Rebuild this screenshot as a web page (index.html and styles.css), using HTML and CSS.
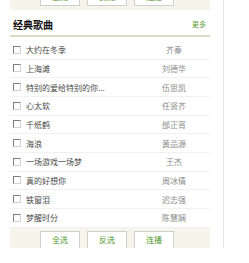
FILE: index.html
```html
<!DOCTYPE html>
<html lang="zh-CN">
<head>
  <meta charset="UTF-8" />
  <meta name="viewport" content="width=device-width, initial-scale=1.0" />
  <title>经典歌曲</title>
  <link rel="stylesheet" href="styles.css">
</head>
<body>

  <div class="panel">
    <!-- 上一个栏目的按钮条（只露出下半截） -->
    <div class="toolbar toolbar-prev">
      <button class="btn">全选</button>
      <button class="btn">反选</button>
      <button class="btn">连播</button>
    </div>

    <div class="box-head">
      <strong>经典歌曲</strong>
      <a class="more" href="#">更多</a>
    </div>

    <ul class="song-list">
      <li><span class="chk"></span><span class="name">大约在冬季</span><span class="singer">齐秦</span></li>
      <li><span class="chk"></span><span class="name">上海滩</span><span class="singer">刘德华</span></li>
      <li><span class="chk"></span><span class="name">特别的爱给特别的你...</span><span class="singer">伍思凯</span></li>
      <li><span class="chk"></span><span class="name">心太软</span><span class="singer">任贤齐</span></li>
      <li><span class="chk"></span><span class="name">千纸鹤</span><span class="singer">邰正宵</span></li>
      <li><span class="chk"></span><span class="name">海浪</span><span class="singer">黄品源</span></li>
      <li><span class="chk"></span><span class="name">一场游戏一场梦</span><span class="singer">王杰</span></li>
      <li><span class="chk"></span><span class="name">真的好想你</span><span class="singer">周冰倩</span></li>
      <li><span class="chk"></span><span class="name">铁窗泪</span><span class="singer">迟志强</span></li>
      <li><span class="chk"></span><span class="name">梦醒时分</span><span class="singer">陈慧娴</span></li>
    </ul>

    <div class="toolbar">
      <button class="btn">全选</button>
      <button class="btn">反选</button>
      <button class="btn">连播</button>
    </div>
  </div>

</body>
</html>
```

FILE: styles.css
```css
body {
  margin: 0;
  font-family: "Noto Sans CJK SC", "Noto Sans", sans-serif;
  background: #fff;
  overflow: hidden;
}
.panel {
  width: 213px;
  height: 263px;
  padding-left: 10px;
  border-right: 1px solid #e6e6e6;
}
.toolbar {
  width: 200px;
  height: 25px;
  box-sizing: border-box;
  background: #f6f5ec;
  display: flex;
  gap: 7px;
  padding: 3px 0 0 30px;
}
.toolbar-prev {
  margin-top: -15px;
}
.btn {
  width: 40px;
  height: 18px;
  padding: 0;
  background: #fff;
  border: 1px solid #cfcfcf;
  color: #4f9a2c;
  font-family: inherit;
  font-size: 8px;
  line-height: 16px;
}
.box-head {
  width: 200px;
  height: 22px;
  margin-top: 3px;
  display: flex;
  align-items: center;
  justify-content: space-between;
  border-bottom: 2px solid #d5ddc3;
}
.box-head strong {
  padding-left: 3px;
  font-size: 10px;
  color: #111;
}
.more {
  margin-right: 4px;
  font-size: 7px;
  color: #5c9c34;
  text-decoration: none;
}
.song-list {
  list-style: none;
  margin: 4px 0 0;
  padding: 0;
  width: 200px;
}
.song-list li {
  height: 17.67px;
  display: flex;
  align-items: center;
  border-bottom: 1px solid #f1f1f1;
  font-size: 8px;
  color: #4a4a4a;
}
.chk {
  width: 6px;
  height: 6px;
  margin: 0 5px 0 3px;
  border: 1px solid;
  border-color: #808080 #d4d4d4 #d4d4d4 #808080;
  background: #fff;
}
.name {
  flex: 1;
}
.singer {
  width: 50px;
  margin-right: 11px;
  text-align: center;
  color: #8a8a8a;
}
```
